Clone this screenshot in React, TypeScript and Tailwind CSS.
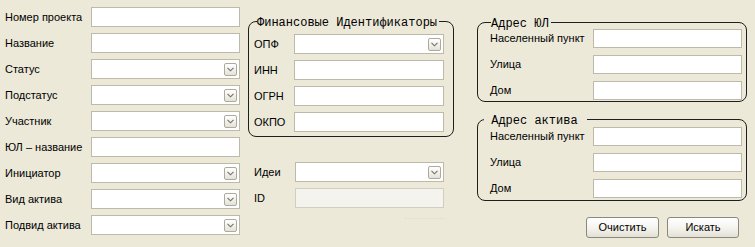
import React from "react";

const SANS = "font-['Liberation_Sans',Arial,sans-serif]";
const MONO = "font-['Liberation_Mono','Courier_New',monospace]";

function Arrow() {
  return (
    <span className="absolute right-[2px] top-[3px] w-[13px] h-[13px] rounded-[2px] border border-[#ADA99B] bg-linear-to-b from-[#FFFFFF] to-[#E4E2D7] flex items-center justify-center">
      <svg width="7" height="5" viewBox="0 0 7 5">
        <polyline points="0.5,0.8 3.5,3.8 6.5,0.8" fill="none" stroke="#6F6F6F" strokeWidth="1.1" />
      </svg>
    </span>
  );
}

function Input({ combo = false, disabled = false, tall = true, wide = false }: { combo?: boolean; disabled?: boolean; tall?: boolean; wide?: boolean }) {
  const size = `${tall ? "h-[20px]" : "h-[19px]"} ${wide ? "w-[150px]" : "w-[149px]"}`;
  const look = disabled ? "border-[#D0CDC1] bg-[#F4F3EE]" : "border-[#BDBAAB] bg-white";
  return <div className={`relative shrink-0 border ${size} ${look}`}>{combo && <Arrow />}</div>;
}

function Row({ label, labelW, children }: { label: string; labelW: string; children: React.ReactNode }) {
  return (
    <div className="flex items-center">
      <span className={`${labelW} shrink-0 text-[11px] leading-[13px] text-black whitespace-nowrap`}>{label}</span>
      {children}
    </div>
  );
}

function Legend({ text, left }: { text: string; left: string }) {
  return (
    <span className={`absolute ${left} top-[-6px] bg-[#ECE9D8] ${MONO} text-[12px] leading-[14px] text-black whitespace-pre pr-[2px]`}>
      {text}
    </span>
  );
}

function Button({ label, w }: { label: string; w: string }) {
  return (
    <div className={`${w} h-[21px] rounded-[3px] border border-[#8C887A] bg-linear-to-b from-[#FFFFFF] via-[#F5F4EF] to-[#E3E1D6] flex items-center justify-center text-[11px] text-black`}>
      {label}
    </div>
  );
}

export default function App() {
  return (
    <div className={`w-[755px] h-[247px] bg-[#ECE9D8] flex overflow-hidden ${SANS}`}>
      {/* Column 1 */}
      <div className="w-[240px] shrink-0 pl-[5px] pt-[7px] flex flex-col gap-[6px]">
        <Row label="Номер проекта" labelW="w-[86px]"><Input /></Row>
        <Row label="Название" labelW="w-[86px]"><Input /></Row>
        <Row label="Статус" labelW="w-[86px]"><Input combo /></Row>
        <Row label="Подстатус" labelW="w-[86px]"><Input combo /></Row>
        <Row label="Участник" labelW="w-[86px]"><Input combo /></Row>
        <Row label="ЮЛ – название" labelW="w-[86px]"><Input /></Row>
        <Row label="Инициатор" labelW="w-[86px]"><Input combo /></Row>
        <Row label="Вид актива" labelW="w-[86px]"><Input combo /></Row>
        <Row label="Подвид актива" labelW="w-[86px]"><Input combo /></Row>
      </div>

      {/* Column 2 */}
      <div className="ml-[8px] w-[206px] shrink-0 flex flex-col">
        <div className="relative mt-[21px] h-[116px] rounded-[8px] border border-[#1E1E1E] pt-[12px] pl-[5px] flex flex-col gap-[6px]">
          <Legend text="Финансовые Идентификаторы" left="left-[8px]" />
          <Row label="ОПФ" labelW="w-[40px]"><Input combo wide /></Row>
          <Row label="ИНН" labelW="w-[40px]"><Input wide /></Row>
          <Row label="ОГРН" labelW="w-[40px]"><Input wide /></Row>
          <Row label="ОКПО" labelW="w-[40px]"><Input wide /></Row>
        </div>
        <div className="mt-[25px] pl-[6px] flex flex-col gap-[6px]">
          <Row label="Идеи" labelW="w-[41px]"><Input combo /></Row>
          <Row label="ID" labelW="w-[41px]"><Input disabled /></Row>
        </div>
        <div className="flex justify-end pr-[9px] mt-[10px]">
          <div className="w-[40px] border-t border-dotted border-[#DEDBCF]" />
        </div>
      </div>

      {/* Column 3 */}
      <div className="ml-[23px] w-[270px] shrink-0 flex flex-col">
        <div className="relative mt-[22px] h-[80px] rounded-[8px] border border-[#1E1E1E] pt-[6px] pl-[12px] flex flex-col gap-[7px]">
          <Legend text="Адрес ЮЛ" left="left-[13px]" />
          <Row label="Населенный пункт" labelW="w-[103px]"><Input tall={false} /></Row>
          <Row label="Улица" labelW="w-[103px]"><Input tall={false} /></Row>
          <Row label="Дом" labelW="w-[103px]"><Input tall={false} /></Row>
        </div>
        <div className="relative mt-[17px] h-[82px] rounded-[8px] border border-[#1E1E1E] pt-[7px] pl-[12px] flex flex-col gap-[7px]">
          <Legend text=" Адрес актива " left="left-[6px]" />
          <Row label="Населенный пункт" labelW="w-[103px]"><Input tall={false} /></Row>
          <Row label="Улица" labelW="w-[103px]"><Input tall={false} /></Row>
          <Row label="Дом" labelW="w-[103px]"><Input tall={false} /></Row>
        </div>
        <div className="mt-[16px] pr-[8px] flex justify-end gap-[8px]">
          <Button label="Очистить" w="w-[73px]" />
          <Button label="Искать" w="w-[72px]" />
        </div>
      </div>
    </div>
  );
}
